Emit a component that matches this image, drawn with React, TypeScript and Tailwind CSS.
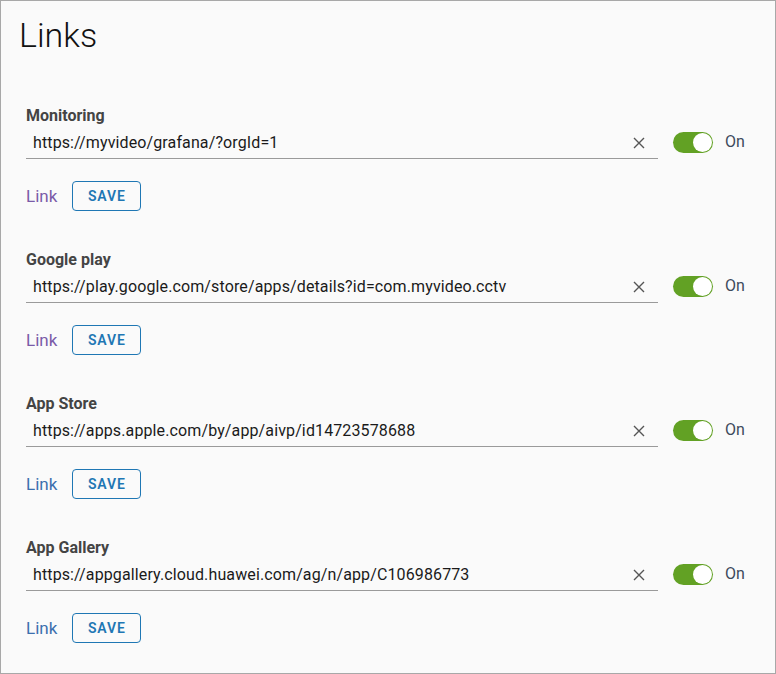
import React from "react";

const items = [
  { label: "Monitoring", url: "https://myvideo/grafana/?orgId=1", visited: true },
  { label: "Google play", url: "https://play.google.com/store/apps/details?id=com.myvideo.cctv", visited: true },
  { label: "App Store", url: "https://apps.apple.com/by/app/aivp/id14723578688", visited: false },
  { label: "App Gallery", url: "https://appgallery.cloud.huawei.com/ag/n/app/C106986773", visited: false },
];

function Section({ label, url, visited }: { label: string; url: string; visited: boolean }) {
  return (
    <div className="flex flex-col">
      <div className="h-[20px] leading-[20px] text-[16px] font-bold text-[#444]">{label}</div>
      <div className="flex items-center h-[33px]">
        <div className="flex items-center w-[632px] h-[33px] border-b border-[#9a9a9a]">
          <span className="flex-1 pl-[7px] text-[16px] tracking-[0.12px] text-[#1a1a1a] pt-[2px]">{url}</span>
          <svg width="12" height="12" viewBox="0 0 12 12" className="mr-[13px] mt-[2px]">
            <path d="M1 1 L11 11 M11 1 L1 11" stroke="#555" strokeWidth="1.4" />
          </svg>
        </div>
        <div className="ml-[15px] w-[40px] h-[21px] rounded-full bg-[#62a124] relative shrink-0">
          <div className="absolute right-[1px] top-[1px] w-[19px] h-[19px] rounded-full bg-white"></div>
        </div>
        <span className="ml-[12px] text-[16px] text-[#3d4a5c] -mt-[1px]">On</span>
      </div>
      <div className="flex items-center mt-[22px] h-[30px]">
        <a className={`text-[17px] pt-[2px] ${visited ? "text-[#7a5ba8]" : "text-[#3c6fae]"}`}>Link</a>
        <button className="ml-[15px] w-[69px] h-[30px] rounded-[4px] border border-[#1f77b4] text-[#1f77b4] text-[14px] font-semibold tracking-[0.06em] flex items-center justify-center">
          SAVE
        </button>
      </div>
    </div>
  );
}

export default function App() {
  return (
    <div
      className="w-[776px] h-[674px] border border-[#a8a8a8] bg-[#fafafa] overflow-hidden"
      style={{ fontFamily: "Roboto, 'Liberation Sans', sans-serif" }}
    >
      <div className="pl-[18px] pt-[14px] text-[34px] font-light leading-[40px] text-[#111]">Links</div>
      <div className="pl-[25px] pt-[51px] flex flex-col gap-[39px]">
        {items.map((it) => (
          <Section key={it.label} {...it} />
        ))}
      </div>
    </div>
  );
}
